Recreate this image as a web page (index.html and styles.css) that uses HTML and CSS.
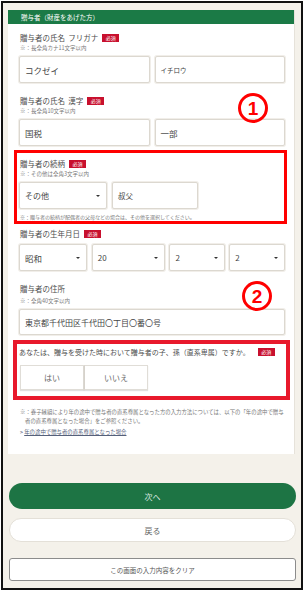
FILE: index.html
```html
<!DOCTYPE html>
<html lang="ja">
<head>
<meta charset="utf-8">
<title>贈与者</title>
<link rel="stylesheet" href="styles.css">
</head>
<body>
<div class="frame">
  <div class="card">
    <div class="card-head">贈与者（財産をあげた方）</div>
    <div class="card-body">
      <div class="field">
        <div class="label">贈与者の氏名&nbsp;&nbsp;フリガナ<span class="req">必須</span></div>
        <div class="note">※：長全角カナ11文字以内</div>
        <div class="row">
          <div class="input half">コクゼイ</div>
          <div class="input half small">イチロウ</div>
        </div>
      </div>
      <div class="field">
        <div class="label">贈与者の氏名&nbsp;&nbsp;漢字<span class="req">必須</span></div>
        <div class="note">※：長全角10文字以内</div>
        <div class="row">
          <div class="input half">国税</div>
          <div class="input half">一部</div>
        </div>
      </div>
      <div class="field">
        <div class="label">贈与者の続柄<span class="req">必須</span></div>
        <div class="note">※：その他は全角3文字以内</div>
        <div class="row">
          <div class="input select rel-sel">その他<span class="caret"></span></div>
          <div class="input rel-in">叔父</div>
        </div>
        <div class="note note-after">※：贈与者の続柄が配偶者の父母などの場合は、その他を選択してください。</div>
      </div>
      <div class="field f-date">
        <div class="label">贈与者の生年月日<span class="req">必須</span></div>
        <div class="row row-date">
          <div class="input select d1">昭和<span class="caret"></span></div>
          <div class="input select d2">20<span class="caret"></span></div>
          <div class="input select d3">2<span class="caret"></span></div>
          <div class="input select d4">2<span class="caret"></span></div>
        </div>
      </div>
      <div class="field">
        <div class="label">贈与者の住所</div>
        <div class="note note-addr">※：全角40文字以内</div>
        <div class="row">
          <div class="input full addr">東京都千代田区千代田〇丁目〇番〇号</div>
        </div>
      </div>
      <div class="field f-q">
        <div class="question">あなたは、贈与を受けた時において贈与者の子、孫（直系卑属）ですか。<span class="req req-q">必須</span></div>
        <div class="seg">
          <div class="seg-btn">はい</div>
          <div class="seg-btn">いいえ</div>
        </div>
      </div>
      <div class="foot-note">※：養子縁組により年の途中で贈与者の直系尊属となった方の入力方法については、以下の「年の途中で贈与者の直系尊属となった場合」をご参照ください。</div>
      <div class="link-row">&gt;&nbsp;<span class="link">年の途中で贈与者の直系尊属となった場合</span></div>
    </div>
    <div class="mark-box box1"></div>
    <div class="mark-box box2"></div>
    <div class="circle-num c1">1</div>
    <div class="circle-num c2">2</div>
  </div>
  <div class="actions">
    <div class="btn btn-next">次へ</div>
    <div class="btn btn-back">戻る</div>
    <div class="btn btn-clear">この画面の入力内容をクリア</div>
  </div>
</div>
</body>
</html>
```
FILE: styles.css
```css
* { box-sizing: border-box; margin: 0; padding: 0; }
html, body { width: 306px; height: 591px; overflow: hidden; }
body {
  background: #fff;
  font-family: "Noto Sans CJK JP", "Noto Sans", sans-serif;
  color: #4a4a4a;
}
.frame {
  margin: 1px 3px 0 1px;
  height: 589px;
  border: 2px solid #111;
  background: #f4f1ea;
  padding: 7px 0 0 5px;
}
.card {
  position: relative;
  width: 287px;
  background: #fff;
  border-right: 1px solid #e6e2da;
}
.card-head {
  height: 14px;
  background: #1b7a46;
  color: #fff;
  font-size: 6.5px;
  line-height: 14px;
  padding-left: 13px;
}
.card-body { padding: 9px 9px 17px 11px; }
.field { margin-top: 13px; }
.field:first-child { margin-top: 0; }
.label {
  display: flex;
  align-items: center;
  height: 10px;
  font-size: 7.5px;
  line-height: 10px;
  padding-left: 1px;
  color: #4d4d4d;
}
.req {
  display: inline-block;
  width: 17px;
  height: 8px;
  margin-left: 4px;
  background: #c8102e;
  color: #fff;
  font-size: 5px;
  line-height: 8px;
  text-align: center;
}
.note {
  height: 7px;
  line-height: 7px;
  font-size: 5.5px;
  color: #7a7a7a;
  margin-top: 2px;
  padding-left: 1px;
  white-space: nowrap;
}
.note-after { margin-top: 4px; font-size: 5px; }
.note-addr { margin-top: 4px; }
.row { display: flex; gap: 5px; margin-top: 4px; }
.input {
  height: 27px;
  border: 1px solid #dcd8d0;
  box-shadow: 0 0 0 1px #f1eee9;
  border-radius: 2px;
  background: #fff;
  display: flex;
  align-items: center;
  padding-left: 5px;
  font-size: 8.5px;
  color: #444;
}
.half { width: 131px; }
.small { font-size: 6.5px; }
.full { width: 267px; }
.addr { height: 26px; font-size: 8px; }
.select { justify-content: space-between; padding-right: 6px; }
.caret {
  width: 0;
  height: 0;
  border-left: 2px solid transparent;
  border-right: 2px solid transparent;
  border-top: 2.5px solid #333;
}
.rel-sel { width: 88px; font-size: 8px; }
.rel-in { width: 86px; font-size: 7.5px; }
.f-date { margin-top: 9px; }
.row-date { margin-top: 5px; gap: 4px; }
.d1 { width: 68px; margin-right: 1px; }
.d2 { width: 74px; font-size: 8px; }
.d3, .d4 { width: 56px; font-size: 8px; }
.f-q { margin-top: 12px; }
.question {
  display: flex;
  align-items: center;
  height: 10px;
  font-size: 7px;
  line-height: 10px;
  color: #4d4d4d;
  white-space: nowrap;
}
.req-q { margin-left: 8px; }
.seg { display: flex; margin-top: 8px; margin-left: 1px; }
.seg-btn {
  width: 64px;
  height: 25px;
  border: 1px solid #e0ddd7;
  box-shadow: 0 1px 1px rgba(0,0,0,0.12);
  background: #fff;
  display: flex;
  align-items: center;
  justify-content: center;
  font-size: 8px;
  color: #6a6a6a;
}
.seg-btn + .seg-btn { border-left: 1px solid #d6d2cb; }
.foot-note {
  margin-top: 18px;
  font-size: 5.4px;
  line-height: 9px;
  color: #777;
  padding-left: 6px;
  text-indent: -5px;
}
.link-row {
  margin-top: 2px;
  font-size: 5.4px;
  line-height: 9px;
  color: #55607a;
  padding-left: 1px;
}
.link { text-decoration: underline; }
.mark-box { position: absolute; }
.box1 { left: 6px; top: 140px; width: 273px; height: 74px; border: 3px solid #ff0000; }
.box2 { left: 5px; top: 330px; width: 277px; height: 60px; border: 4px solid #e8192c; }
.circle-num {
  position: absolute;
  width: 30px;
  height: 30px;
  border: 3px solid #ff0000;
  border-radius: 50%;
  display: flex;
  align-items: center;
  justify-content: center;
  font-family: "Liberation Sans", "DejaVu Sans", sans-serif;
  font-size: 19px;
  font-weight: 700;
  line-height: 1;
  color: #ff0000;
}
.c1 { left: 230px; top: 83px; }
.c2 { left: 234px; top: 271px; }
.actions { display: flex; flex-direction: column; margin-top: 29px; margin-left: 1px; width: 287px; }
.btn { display: flex; align-items: center; justify-content: center; }
.btn-next {
  height: 26px;
  border-radius: 13px;
  background: #1d7444;
  color: #dcebe1;
  font-size: 8px;
}
.btn-back {
  margin-top: 9px;
  height: 24px;
  border-radius: 12px;
  background: #fff;
  border: 1px solid #e4e0d8;
  color: #666;
  font-size: 8px;
}
.btn-clear {
  margin-top: 16px;
  height: 23px;
  border-radius: 3px;
  background: #fff;
  border: 1.5px solid #8c8c8c;
  color: #555;
  font-size: 6.5px;
}
```
